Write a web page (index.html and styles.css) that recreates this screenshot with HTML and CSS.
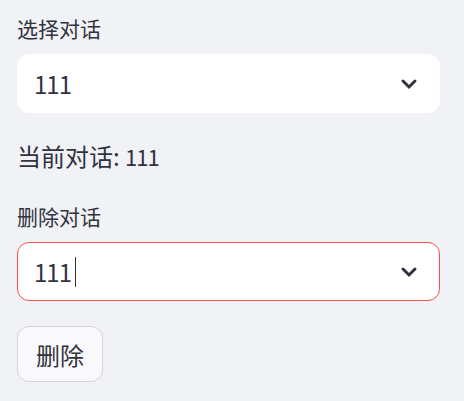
FILE: index.html
```html
<!DOCTYPE html>
<html lang="zh">
<head>
<meta charset="utf-8">
<title>对话</title>
<link rel="stylesheet" href="styles.css">
</head>
<body>
<main class="page">
  <div class="field">
    <label class="label">选择对话</label>
    <div class="select">
      <span class="value">111</span>
      <svg class="chevron" viewBox="0 0 18 12" width="18" height="12" aria-hidden="true"><polyline points="3,3 9,9 15,3"/></svg>
    </div>
  </div>
  <p class="current">当前对话: <span class="num">111</span></p>
  <div class="field">
    <label class="label">删除对话</label>
    <div class="select focused">
      <span class="value">111<span class="caret"></span></span>
      <svg class="chevron" viewBox="0 0 18 12" width="18" height="12" aria-hidden="true"><polyline points="3,3 9,9 15,3"/></svg>
    </div>
  </div>
  <button class="btn" type="button">删除</button>
</main>
</body>
</html>
```
FILE: styles.css
```css
html, body {
  margin: 0;
  padding: 0;
  background: #f0f2f6;
}
body {
  font-family: "Noto Sans CJK SC", "Noto Sans", sans-serif;
  color: #31333f;
}
.page {
  padding: 13px 24px 0 17px;
  display: flex;
  flex-direction: column;
  align-items: flex-start;
}
.field {
  width: 100%;
  display: flex;
  flex-direction: column;
}
.label {
  font-size: 21px;
  line-height: 30px;
  margin-bottom: 11px;
}
.select {
  box-sizing: border-box;
  height: 59px;
  background: #ffffff;
  border: 1px solid #ffffff;
  border-radius: 12px;
  display: flex;
  align-items: center;
  justify-content: space-between;
  padding: 0 21px 0 16px;
}
.select.focused {
  border-color: #ff4b4b;
}
.value {
  font-size: 24px;
  line-height: 34px;
  letter-spacing: -1px;
  display: flex;
  align-items: center;
}
.caret {
  display: inline-block;
  width: 1px;
  height: 30px;
  background: #31333f;
  margin-left: 4px;
}
.chevron {
  fill: none;
  stroke: #31333f;
  stroke-width: 3;
  stroke-linecap: round;
  stroke-linejoin: miter;
}
.current {
  margin: 26px 0 28px;
  font-size: 24px;
  line-height: 34px;
}
.current .num {
  font-size: 22px;
  letter-spacing: -1px;
}
.btn {
  margin-top: 25px;
  box-sizing: border-box;
  height: 56px;
  padding: 0 18px;
  font-family: inherit;
  font-size: 24px;
  color: #31333f;
  background: #f9f9fb;
  border: 1px solid #d3d4d8;
  border-radius: 12px;
}
```
